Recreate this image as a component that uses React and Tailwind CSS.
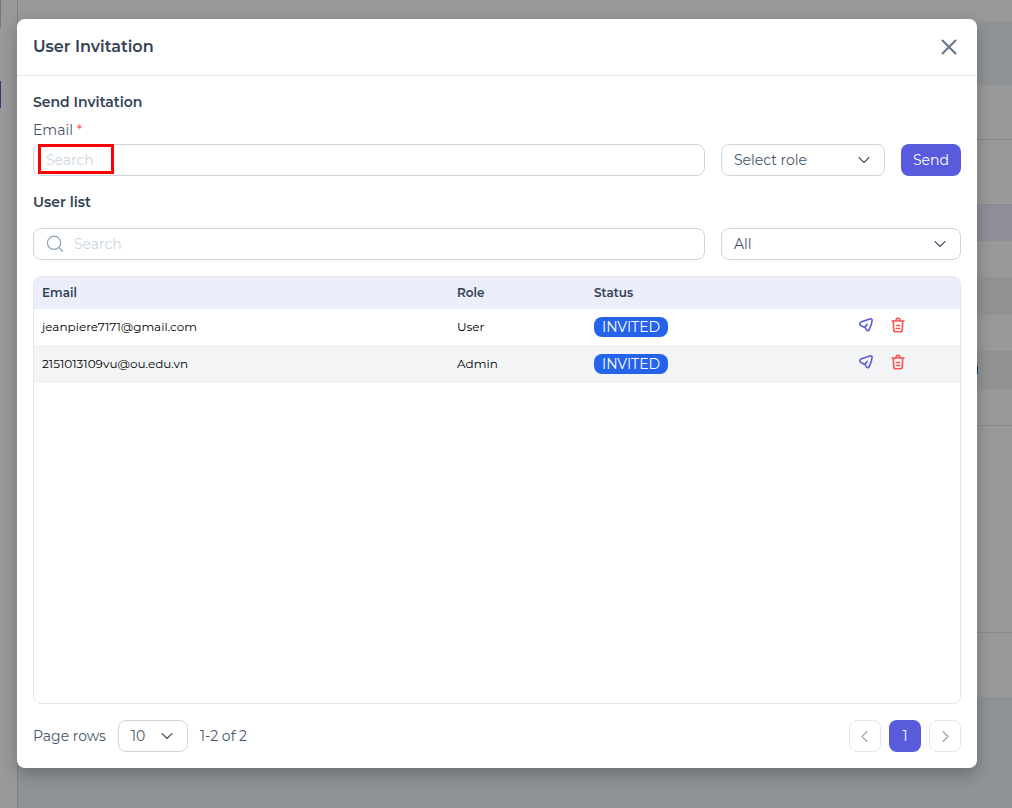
import { useState } from 'react';

const initialUsers = [
  { id: 1, email: 'jeanpiere7171@gmail.com', role: 'User', status: 'INVITED', row: 'h-9 bg-white' },
  { id: 2, email: '2151013109vu@ou.edu.vn', role: 'Admin', status: 'INVITED', row: 'h-[38px] bg-gray-100' },
];

const Chevron = ({ className, d = 'M1 1.5l5 5l5-5', box = '0 0 13 8' }) => (
  <svg className={className} viewBox={box} fill="none" stroke="currentColor" strokeWidth="1.1" strokeLinecap="round" strokeLinejoin="round">
    <path d={d} />
  </svg>
);

const SendIcon = () => (
  <svg className="h-4 w-4" viewBox="0 0 16 16" fill="none" stroke="currentColor" strokeWidth="1.6" strokeLinecap="round" strokeLinejoin="round">
    <path d="M2.9 5.1L11.8 2Q14.3 1.4 14.1 3.6Q13.6 8 11.2 12.5Q10 14.8 8.5 12.9L6.9 10.4L3.2 8.7Q.4 6.8 2.9 5.1Z" />
    <path d="M6.9 10.2L9.1 7.4" />
  </svg>
);

const TrashIcon = () => (
  <svg className="h-4 w-4" viewBox="0 0 16 16" fill="none" stroke="currentColor" strokeWidth="1.6" strokeLinecap="round" strokeLinejoin="round">
    <path d="M2 4H14M5.6 3.8L6.1 2.6Q6.5 1.4 7.6 1.4H8.4Q9.5 1.4 9.9 2.6L10.4 3.8" />
    <path d="M3.3 4.4L3.7 12.6Q3.8 14.8 5.8 14.8H10.2Q12.2 14.8 12.3 12.6L12.7 4.4M6.4 8.5H9.6M6.4 11.5H9.6" />
  </svg>
);

// Dimmed page that stays visible behind the modal
const PageBehind = () => (
  <div className="flex h-[808px] w-full">
    <div className="w-[18px] border-r border-gray-300 bg-white">
      <div className="h-7 w-px bg-[#c5c6f5]" />
      <div className="mt-[53px] h-[27px] w-px bg-[#575bdc]" />
    </div>
    <div className="flex-1 bg-[#eff5f9]">
      <div className="h-[21px] bg-white" />
      <div className="h-16" />
      <div className="h-[55px] border-b border-gray-200 bg-white" />
      <div className="h-[65px] border-b border-gray-200 bg-white" />
      <div className="h-9 bg-[#edeefc]" />
      <div className="h-[36px] bg-white" />
      <div className="h-[38px] bg-gray-100" />
      <div className="h-9 bg-white" />
      <div className="flex h-[38px] items-center justify-end bg-gray-100 pr-[34px]">
        <div className="h-2 w-1 bg-blue-600" />
      </div>
      <div className="h-[37px] border-b border-gray-200 bg-white" />
      <div className="h-[207px] border-b border-gray-200 bg-white" />
      <div className="h-[64px] bg-white" />
    </div>
  </div>
);

export default function App() {
  const [users, setUsers] = useState(initialUsers);
  const [email, setEmail] = useState('');
  const [search, setSearch] = useState('');

  const handleDelete = (id) => {
    setUsers(users.filter((user) => user.id !== id));
  };

  const visibleUsers = users.filter((user) => user.email.includes(search));

  return (
    <div className="relative h-[808px] overflow-hidden font-['Montserrat','Inter',sans-serif] text-sm leading-5 text-[#475569]">
      <PageBehind />
      <div className="absolute inset-0 bg-black/40 pt-[19px] pl-[17px]">
        <div className="flex h-[749px] w-[960px] flex-col rounded-lg bg-white shadow-[0_6px_16px_rgba(0,0,0,0.25)]">
          <div className="flex h-[57px] items-center justify-between border-b border-gray-200 pr-5 pl-4">
            <h1 className="text-base font-semibold text-[#334155]">User Invitation</h1>
            <button className="text-[#64748b]">
              <svg className="h-4 w-4" viewBox="0 0 16 16" fill="none" stroke="currentColor" strokeWidth="2" strokeLinecap="round">
                <path d="M1.5 1.5l13 13M14.5 1.5l-13 13" />
              </svg>
            </button>
          </div>

          <div className="flex flex-1 flex-col p-4">
            <h2 className="font-semibold text-[#334155]">Send Invitation</h2>
            <label className="mt-2">
              Email <span className="text-[#f95454]">*</span>
            </label>
            <div className="mt-1 flex gap-4">
              <div className="relative w-[672px]">
                <input
                  value={email}
                  onChange={(e) => setEmail(e.target.value)}
                  placeholder="Search"
                  className="h-8 w-full rounded-lg border border-[#cfd4de] px-3 outline-none placeholder:text-[#cbd5e1]"
                />
                <div className="pointer-events-none absolute top-0 left-[5px] h-[30px] w-[76px] border-3 border-[#ff0000]" />
              </div>
              <button className="flex h-8 w-[164px] items-center justify-between rounded-lg border border-[#cfd4de] pr-[13px] pl-3">
                Select role
                <Chevron className="h-2 w-[13px]" />
              </button>
              <button className="h-8 w-[60px] rounded-lg bg-[#575bdc] text-white">Send</button>
            </div>

            <h2 className="mt-4 font-semibold text-[#334155]">User list</h2>
            <div className="mt-4 flex gap-4">
              <div className="flex h-8 w-[672px] items-center gap-2.5 rounded-lg border border-[#cfd4de] pl-3">
                <svg className="h-[18px] w-[18px] shrink-0 text-[#94a3b8]" viewBox="0 0 18 18" fill="none" stroke="currentColor" strokeWidth="1.3" strokeLinecap="round">
                  <circle cx="8" cy="7.8" r="6.6" />
                  <path d="M13 12.8l3.5 3.5" />
                </svg>
                <input
                  value={search}
                  onChange={(e) => setSearch(e.target.value)}
                  placeholder="Search"
                  className="flex-1 outline-none placeholder:text-[#cbd5e1]"
                />
              </div>
              <button className="flex h-8 w-60 items-center justify-between rounded-lg border border-[#cfd4de] pr-[13px] pl-3">
                All
                <Chevron className="h-2 w-[13px]" />
              </button>
            </div>

            <div className="mt-4 h-[428px] overflow-hidden rounded-lg border border-gray-200">
              <table className="w-full table-fixed text-left text-xs">
                <colgroup>
                  <col className="w-[415px]" />
                  <col className="w-[137px]" />
                  <col className="w-[264px]" />
                  <col />
                </colgroup>
                <thead>
                  <tr className="h-8 bg-[#edeefc] text-[#334155]">
                    <th className="px-2 py-0 font-semibold">Email</th>
                    <th className="px-2 py-0 font-semibold">Role</th>
                    <th className="px-2 py-0 font-semibold">Status</th>
                    <th />
                  </tr>
                </thead>
                <tbody className="text-black">
                  {visibleUsers.map((user) => (
                    <tr key={user.id} className={user.row}>
                      <td className="px-2 py-0">{user.email}</td>
                      <td className="px-2 py-0">{user.role}</td>
                      <td className="px-2 py-0">
                        <span className="flex h-5 w-[74px] items-center justify-center rounded-lg bg-[#2563eb] text-sm leading-5 text-white">
                          {user.status}
                        </span>
                      </td>
                      <td className="p-0">
                        <div className="mb-1 flex gap-4 pl-2">
                          <button className="text-[#575bdc]">
                            <SendIcon />
                          </button>
                          <button className="text-[#f95454]" onClick={() => handleDelete(user.id)}>
                            <TrashIcon />
                          </button>
                        </div>
                      </td>
                    </tr>
                  ))}
                </tbody>
              </table>
            </div>

            <div className="mt-4 flex items-center justify-between">
              <div className="flex items-center gap-3">
                <span className="w-[73px] whitespace-nowrap">Page rows</span>
                <button className="flex h-8 w-[70px] items-center justify-between rounded-lg border border-[#cfd4de] pr-[13px] pl-3">
                  10
                  <Chevron className="h-2 w-[13px]" />
                </button>
                <span>1-2 of 2</span>
              </div>
              <div className="flex gap-2">
                <button className="flex h-8 w-8 items-center justify-center rounded-lg border border-gray-200 text-gray-400">
                  <Chevron className="h-[13px] w-2" d="M6 1.5l-5 5l5 5" box="0 0 8 13" />
                </button>
                <button className="h-8 w-8 rounded-lg bg-[#575bdc] text-white">1</button>
                <button className="flex h-8 w-8 items-center justify-center rounded-lg border border-gray-200 text-gray-400">
                  <Chevron className="h-[13px] w-2" d="M2 1.5l5 5l-5 5" box="0 0 8 13" />
                </button>
              </div>
            </div>
          </div>
        </div>
      </div>
    </div>
  );
}
